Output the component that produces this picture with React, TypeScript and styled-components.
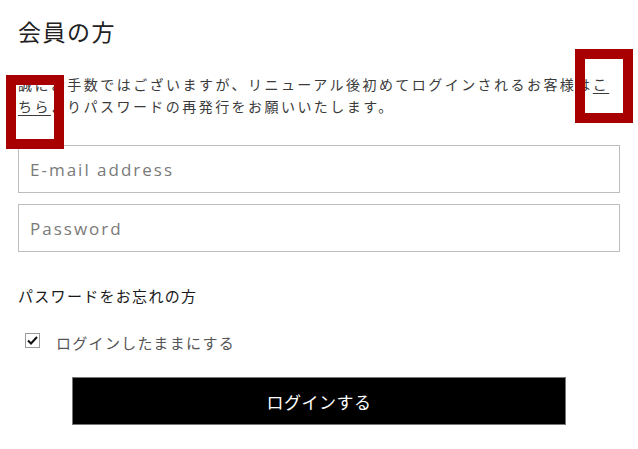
import React from "react";
import styled, { createGlobalStyle } from "styled-components";

const Global = createGlobalStyle`
  html, body { margin: 0; padding: 0; background: #fff; }
  body { font-family: "Noto Sans CJK JP", "Noto Sans", sans-serif; }
`;

const Page = styled.div`
  position: relative;
  width: 638px;
  height: 449px;
  box-sizing: border-box;
  padding: 13px 18px 0 18px;
  overflow: hidden;
`;

const Title = styled.h2`
  margin: 0;
  font-family: "Noto Sans CJK JP", serif;
  font-weight: 400;
  font-size: 23px;
  line-height: 36px;
  letter-spacing: 1.5px;
  color: #222;
`;

const Lead = styled.p`
  margin: 24px 0 0 0;
  font-size: 14px;
  line-height: 22px;
  letter-spacing: 2.45px;
  color: #3a3a3a;
  a { color: #3a3a3a; text-decoration: underline; text-underline-offset: 3px; }
`;

const Form = styled.form`
  display: flex;
  flex-direction: column;
  margin-top: 28px;
`;

const Fields = styled.div`
  display: flex;
  flex-direction: column;
  gap: 11px;
`;

const Input = styled.input`
  box-sizing: border-box;
  width: 602px;
  height: 48px;
  border: 1px solid #bdbdbd;
  border-radius: 0;
  padding: 0 11px;
  font-family: "Open Sans", sans-serif;
  font-size: 17px;
  letter-spacing: 2px;
  color: #333;
  outline: none;
  &::placeholder { color: #7a7a7a; }
`;

const Forgot = styled.a`
  display: block;
  margin-top: 33px;
  font-size: 15px;
  line-height: 22px;
  letter-spacing: 1.3px;
  color: #1a1a1a;
  text-decoration: none;
`;

const CheckRow = styled.label`
  display: flex;
  align-items: center;
  gap: 16px;
  margin-top: 24px;
  padding-left: 7px;
  height: 22px;
`;

const CheckBox = styled.span`
  box-sizing: border-box;
  width: 15px;
  height: 15px;
  border: 1px solid #9a9a9a;
  display: flex;
  align-items: center;
  justify-content: center;
  margin-top: -4px;
`;

const CheckLabel = styled.span`
  font-size: 15px;
  letter-spacing: 1.3px;
  color: #555;
`;

const Submit = styled.button`
  align-self: center;
  margin-top: 24px;
  width: 494px;
  height: 48px;
  background: #000;
  border: 1px solid #777;
  color: #fff;
  font-family: "Noto Sans CJK JP", sans-serif;
  font-size: 17px;
  letter-spacing: 0.5px;
  cursor: pointer;
`;

const Mark = styled.div`
  position: absolute;
  box-sizing: border-box;
  width: 58px;
  height: 74px;
  border: 10px solid #a80000;
`;

export default function App() {
  return (
    <>
      <Global />
      <Page>
        <Title>会員の方</Title>
        <Lead>
          誠にお手数ではございますが、リニューアル後初めてログインされるお客様は
          <a href="#">こちら</a>よりパスワードの再発行をお願いいたします。
        </Lead>
        <Form onSubmit={(e) => e.preventDefault()}>
          <Fields>
            <Input type="email" placeholder="E-mail address" />
            <Input type="password" placeholder="Password" />
          </Fields>
          <Forgot href="#">パスワードをお忘れの方</Forgot>
          <CheckRow>
            <CheckBox>
              <svg width="11" height="9" viewBox="0 0 11 9">
                <path d="M1 4.5 L4 7.5 L10 1" fill="none" stroke="#111" strokeWidth="2" />
              </svg>
            </CheckBox>
            <CheckLabel>ログインしたままにする</CheckLabel>
          </CheckRow>
          <Submit type="submit">ログインする</Submit>
        </Form>
        <Mark style={{ left: 6, top: 75 }} />
        <Mark style={{ left: 575, top: 49 }} />
      </Page>
    </>
  );
}
